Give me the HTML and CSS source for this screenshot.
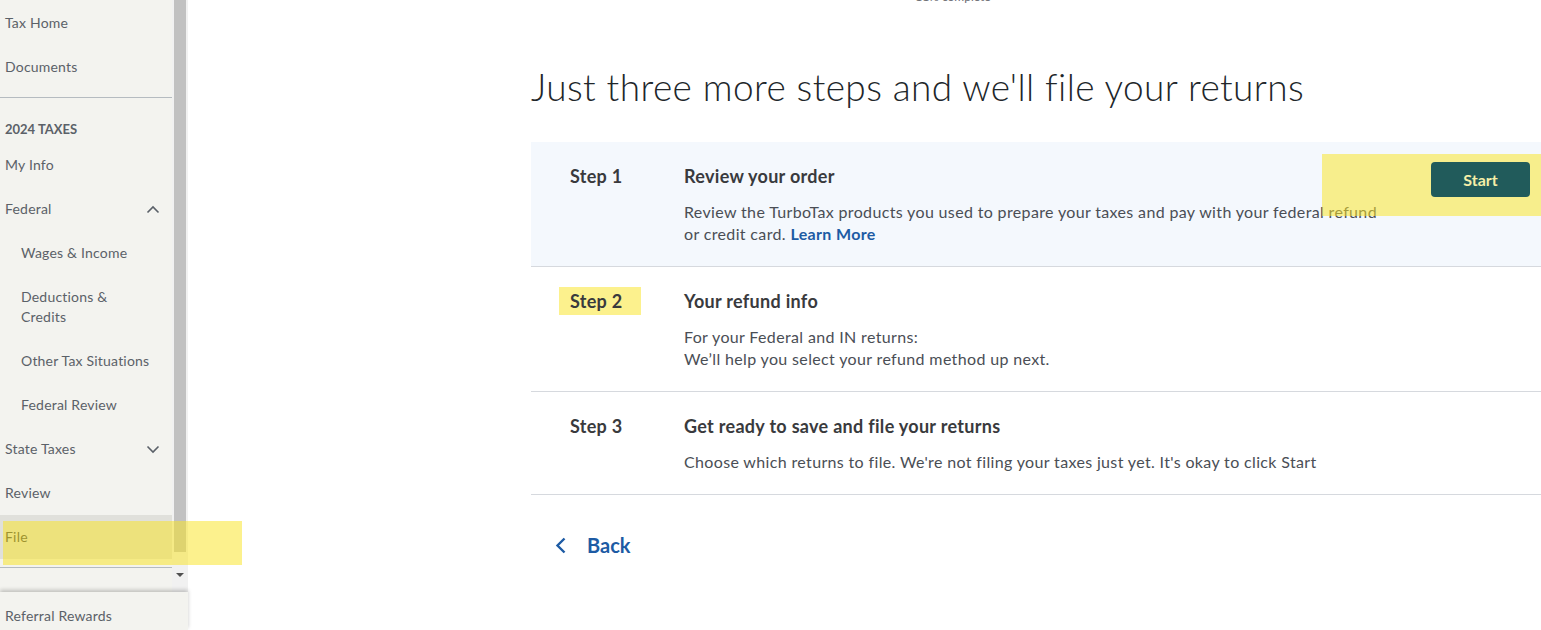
FILE: index.html
```html
<!DOCTYPE html>
<html lang="en">
<head>
    <meta charset="UTF-8">
    <meta name="viewport" content="width=device-width, initial-scale=1.0">
    <title>File your returns</title>
    <link rel="stylesheet" href="styles.css">
</head>
<body>
    <aside class="side">
        <div class="side-top">
            <nav class="nav">
                <a class="nav-item" href="#">Tax Home</a>
                <a class="nav-item" href="#">Documents</a>
                <div class="nav-line"></div>
                <div class="nav-head">2024 TAXES</div>
                <a class="nav-item" href="#">My Info</a>
                <a class="nav-item has-arrow" href="#">Federal
                    <svg width="14" height="9" viewBox="0 0 14 9"><path d="M1.5 7.5 7 2l5.5 5.5" fill="none" stroke="#5a6068" stroke-width="1.6"/></svg>
                </a>
                <a class="nav-item sub" href="#">Wages &amp; Income</a>
                <a class="nav-item sub" href="#">Deductions &amp;<br>Credits</a>
                <a class="nav-item sub" href="#">Other Tax Situations</a>
                <a class="nav-item sub" href="#">Federal Review</a>
                <a class="nav-item has-arrow" href="#">State Taxes
                    <svg width="14" height="9" viewBox="0 0 14 9"><path d="M1.5 1.5 7 7l5.5-5.5" fill="none" stroke="#5a6068" stroke-width="1.6"/></svg>
                </a>
                <a class="nav-item" href="#">Review</a>
                <a class="nav-item on" href="#">File</a>
                <div class="nav-line"></div>
                <a class="nav-item tools" href="#">Tax Tools</a>
            </nav>
            <div class="bar">
                <div class="bar-thumb"></div>
                <div class="bar-arrow"></div>
            </div>
        </div>
        <div class="side-bottom">
            <a class="nav-item" href="#">Referral Rewards</a>
        </div>
    </aside>

    <main class="main">
        <div class="progress-label">11% complete</div>
        <h1 class="title">Just three more steps and we'll file your returns</h1>

        <div class="steps">
            <div class="step current">
                <div class="step-num">Step 1</div>
                <div class="step-body">
                    <h3>Review your order</h3>
                    <p>Review the TurboTax products you used to prepare your taxes and pay with your federal refund or credit card. <a href="#">Learn More</a></p>
                </div>
                <button class="btn-start">Start</button>
                <div class="mark mark-start"></div>
            </div>
            <div class="step">
                <div class="step-num">Step 2</div>
                <div class="step-body">
                    <h3>Your refund info</h3>
                    <p>For your Federal and IN returns:<br>We’ll help you select your refund method up next.</p>
                </div>
                <div class="mark mark-step"></div>
            </div>
            <div class="step">
                <div class="step-num">Step 3</div>
                <div class="step-body">
                    <h3>Get ready to save and file your returns</h3>
                    <p>Choose which returns to file. We're not filing your taxes just yet. It's okay to click Start</p>
                </div>
            </div>
        </div>

        <a class="back" href="#">
            <svg width="12" height="17" viewBox="0 0 12 17"><path d="M9.5 1.5 2.5 8.5l7 7" fill="none" stroke="#1d5ba4" stroke-width="2.4"/></svg>
            <span>Back</span>
        </a>
    </main>

    <div class="mark mark-file"></div>
</body>
</html>
```

FILE: styles.css
```css
body,h1,h3,p{
    margin:0;
}
a{
    text-decoration:none;
}
body{
    position:relative;
    display:flex;
    width:1541px;
    height:630px;
    overflow:hidden;
    font-family:Lato,"Noto Sans",sans-serif;
    background-color:#fff;
    color:#393a3d;
}
/* 左侧导航 */
.side{
    display:flex;
    flex-direction:column;
    flex:none;
    width:188px;
    height:630px;
}
.side-top{
    display:flex;
    flex:none;
    height:592px;
    overflow:hidden;
}
.nav{
    width:172px;
    padding-top:1px;
    background-color:#f3f3ef;
}
.nav-item{
    display:flex;
    align-items:center;
    justify-content:space-between;
    padding:12px 12px 12px 5px;
    line-height:20px;
    font-size:14px;
    letter-spacing:.2px;
    color:#5b6168;
}
.nav-item.sub{
    padding-left:21px;
}
.nav-item.on{
    background-color:#e0e0db;
    color:#393a3d;
}
.nav-item.tools{
    margin-top:10px;
}
.nav-line{
    height:1px;
    margin:8px 0 0;
    background-color:#b5bbc0;
}
.nav-head{
    padding:22px 5px 5px;
    line-height:18px;
    font-size:13px;
    font-weight:700;
    color:#5b6168;
}
.bar{
    display:flex;
    flex-direction:column;
    align-items:center;
    width:16px;
    background-color:#f1f1f1;
}
.bar-thumb{
    width:12px;
    height:552px;
    background-color:#c1c1c1;
}
.bar-arrow{
    margin-top:21px;
    border-left:4px solid transparent;
    border-right:4px solid transparent;
    border-top:4px solid #505050;
}
.side-bottom{
    position:relative;
    flex:1;
    overflow:hidden;
    background-color:#f3f3ef;
    box-shadow:0 -2px 4px rgba(0,0,0,.22);
}
.side-bottom .nav-item{
    padding-top:14px;
}
/* 主内容 */
.main{
    flex:none;
    width:1024px;
    padding-left:343px;
}
.progress-label{
    width:844px;
    margin-top:-10px;
    line-height:14px;
    font-size:12px;
    text-align:center;
    color:#6b6c72;
}
.title{
    margin-top:61px;
    line-height:44px;
    font-size:37px;
    font-weight:300;
    color:#21262a;
    letter-spacing:.4px;
}
.steps{
    margin-top:33px;
}
.step{
    position:relative;
    display:flex;
    align-items:flex-start;
    padding:22px 25px 21px 39px;
    border-bottom:1px solid #d6d9de;
}
.step.current{
    background-color:#f4f8fd;
}
.step-num{
    position:relative;
    z-index:2;
    flex:none;
    width:114px;
    line-height:24px;
    font-size:18px;
    font-weight:700;
    letter-spacing:.3px;
}
.step-body{
    flex:1;
}
.step-body h3{
    line-height:24px;
    font-size:18px;
    font-weight:700;
    letter-spacing:.3px;
}
.step-body p{
    max-width:700px;
    margin-top:13px;
    line-height:22px;
    font-size:16px;
    letter-spacing:.35px;
    color:#4a4e55;
}
.step-body p a{
    font-weight:700;
    color:#1d5ba4;
}
.btn-start{
    position:relative;
    z-index:2;
    flex:none;
    width:99px;
    height:35px;
    margin-top:-2px;
    border:none;
    border-radius:4px;
    background-color:#215b5b;
    font-family:inherit;
    font-size:16px;
    font-weight:700;
    color:#f6efa8;
}
.back{
    display:flex;
    align-items:center;
    gap:20px;
    margin:38px 0 0 24px;
    line-height:24px;
    font-size:20px;
    font-weight:700;
    color:#1d5ba4;
}
.back svg{
    margin-top:1px;
}
/* 黄色标记 */
.mark{
    position:absolute;
    background-color:rgba(250,228,36,.52);
}
.mark-start{
    left:791px;
    top:12px;
    width:240px;
    height:62px;
    z-index:1;
}
.mark-step{
    left:28px;
    top:20px;
    width:82px;
    height:28px;
}
.mark-file{
    left:3px;
    top:521px;
    width:239px;
    height:44px;
}
```
